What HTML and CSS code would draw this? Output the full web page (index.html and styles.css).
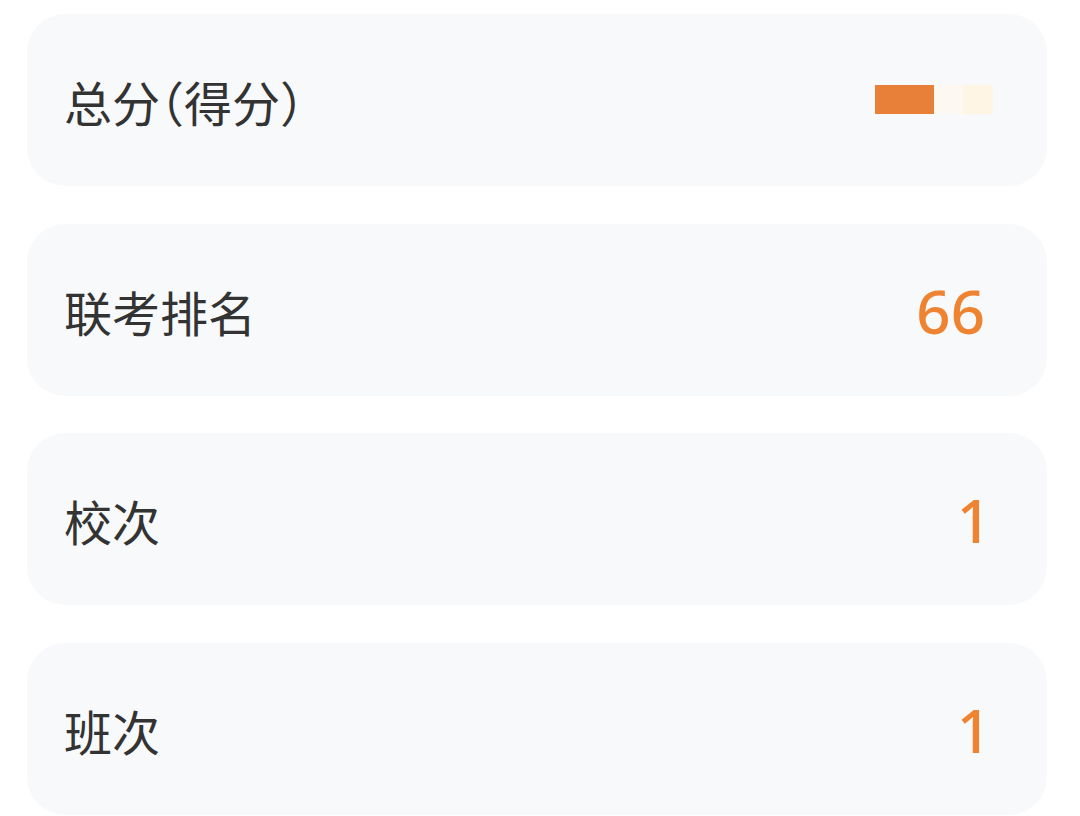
FILE: index.html
```html
<!DOCTYPE html>
<html lang="zh">
<head>
<meta charset="utf-8">
<link rel="stylesheet" href="styles.css">
</head>
<body>
<div class="list">
  <div class="card">
    <span class="label">总分（得分）</span>
    <span class="masked"><span class="blk-a"></span><span class="blk-b"></span><span class="blk-c"></span></span>
  </div>
  <div class="card">
    <span class="label">联考排名</span>
    <span class="value">66</span>
  </div>
  <div class="card">
    <span class="label">校次</span>
    <span class="value value-one">1</span>
  </div>
  <div class="card">
    <span class="label">班次</span>
    <span class="value value-one">1</span>
  </div>
</div>
</body>
</html>
```
FILE: styles.css
```css
html, body {
  margin: 0;
  padding: 0;
  background: #ffffff;
}
body {
  font-family: "Noto Sans CJK SC", "Noto Sans", sans-serif;
  width: 1080px;
  height: 816px;
  overflow: hidden;
}
.list {
  display: flex;
  flex-direction: column;
  gap: 37.5px;
  padding: 14px 33px 0 27px;
}
.card {
  height: 172px;
  background: #f8f9fb;
  border-radius: 38px;
  display: flex;
  align-items: center;
  justify-content: space-between;
  padding: 2px 62px 0 37px;
  box-sizing: border-box;
}
.label {
  font-size: 48px;
  color: #333333;
  font-weight: 400;
  font-feature-settings: "halt";
  line-height: 1;
}
.value {
  font-family: "Noto Sans", sans-serif;
  font-size: 60px;
  font-weight: 500;
  color: #ee8332;
  line-height: 1;
  margin-top: 0;
}
.value-one {
  margin-right: -6px;
}
.masked {
  display: flex;
  align-items: center;
  height: 29px;
  margin-right: -8px;
  margin-top: -4px;
}
.blk-a {
  width: 59px;
  height: 29px;
  background: #e8803a;
}
.blk-b {
  width: 29px;
  height: 29px;
  background: #fdf9f2;
}
.blk-c {
  width: 30px;
  height: 29px;
  background: #fef5e4;
}
```
